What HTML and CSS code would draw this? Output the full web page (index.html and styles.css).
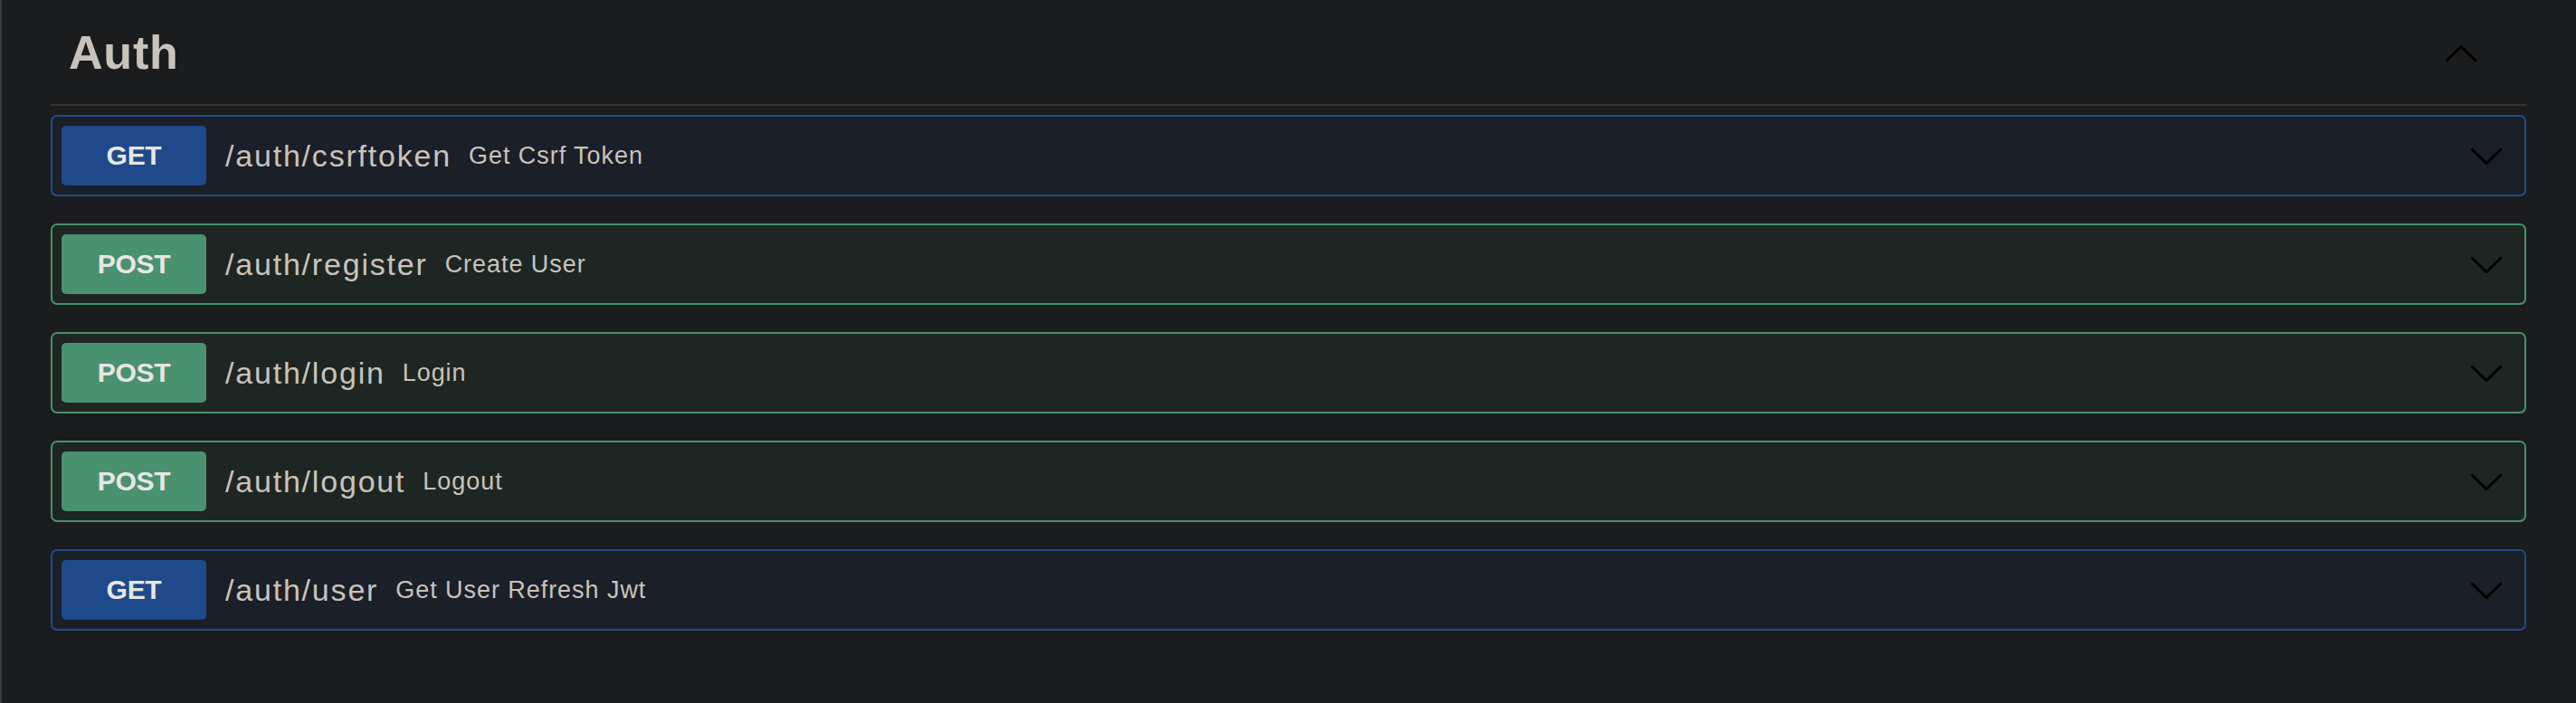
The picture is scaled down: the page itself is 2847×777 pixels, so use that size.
FILE: index.html
```html
<!DOCTYPE html>
<html lang="en">
<head>
<meta charset="utf-8">
<title>Auth</title>
<link rel="stylesheet" href="styles.css">
</head>
<body>
<div class="page">
  <section class="tag-section">
    <h3 class="tag-heading">
      <span class="tag-name">Auth</span>
      <button class="expand" aria-label="Collapse">
        <svg class="arrow" width="40" height="40" viewBox="0 0 20 20" aria-hidden="true"><path d="M17.418 14.908c.272.268.709.268.979 0s.271-.701 0-.969l-7.908-7.83c-.27-.268-.707-.268-.979 0l-7.908 7.83c-.27.268-.27.701 0 .969.271.268.709.268.979 0L10 7.767l7.418 7.141z"/></svg>
      </button>
    </h3>
    <div class="ops">
      <div class="opblock get">
        <span class="method">GET</span>
        <span class="path">/auth/csrftoken</span>
        <span class="desc">Get Csrf Token</span>
        <svg class="arrow down" width="40" height="40" viewBox="0 0 20 20" aria-hidden="true"><path d="M17.418 6.109c.272-.268.709-.268.979 0s.271.701 0 .969l-7.908 7.830c-.27.268-.707.268-.979 0l-7.908-7.830c-.27-.268-.27-.701 0-.969.271-.268.709-.268.979 0L10 13.25l7.418-7.141z"/></svg>
      </div>
      <div class="opblock post">
        <span class="method">POST</span>
        <span class="path">/auth/register</span>
        <span class="desc">Create User</span>
        <svg class="arrow down" width="40" height="40" viewBox="0 0 20 20" aria-hidden="true"><path d="M17.418 6.109c.272-.268.709-.268.979 0s.271.701 0 .969l-7.908 7.830c-.27.268-.707.268-.979 0l-7.908-7.830c-.27-.268-.27-.701 0-.969.271-.268.709-.268.979 0L10 13.25l7.418-7.141z"/></svg>
      </div>
      <div class="opblock post">
        <span class="method">POST</span>
        <span class="path">/auth/login</span>
        <span class="desc">Login</span>
        <svg class="arrow down" width="40" height="40" viewBox="0 0 20 20" aria-hidden="true"><path d="M17.418 6.109c.272-.268.709-.268.979 0s.271.701 0 .969l-7.908 7.830c-.27.268-.707.268-.979 0l-7.908-7.830c-.27-.268-.27-.701 0-.969.271-.268.709-.268.979 0L10 13.25l7.418-7.141z"/></svg>
      </div>
      <div class="opblock post">
        <span class="method">POST</span>
        <span class="path">/auth/logout</span>
        <span class="desc">Logout</span>
        <svg class="arrow down" width="40" height="40" viewBox="0 0 20 20" aria-hidden="true"><path d="M17.418 6.109c.272-.268.709-.268.979 0s.271.701 0 .969l-7.908 7.830c-.27.268-.707.268-.979 0l-7.908-7.830c-.27-.268-.27-.701 0-.969.271-.268.709-.268.979 0L10 13.25l7.418-7.141z"/></svg>
      </div>
      <div class="opblock get">
        <span class="method">GET</span>
        <span class="path">/auth/user</span>
        <span class="desc">Get User Refresh Jwt</span>
        <svg class="arrow down" width="40" height="40" viewBox="0 0 20 20" aria-hidden="true"><path d="M17.418 6.109c.272-.268.709-.268.979 0s.271.701 0 .969l-7.908 7.830c-.27.268-.707.268-.979 0l-7.908-7.830c-.27-.268-.27-.701 0-.969.271-.268.709-.268.979 0L10 13.25l7.418-7.141z"/></svg>
      </div>
    </div>
  </section>
</div>
</body>
</html>
```

FILE: styles.css
```css
html, body {
  margin: 0;
  padding: 0;
  background: #1b1c1e;
}

body {
  font-family: "Liberation Sans", Arial, sans-serif;
  color: #c8c3bc;
}

.page {
  min-height: 777px;
  box-sizing: border-box;
  border-left: 2px solid #3a3b3d;
  padding: 0 55px 0 54px;
}

.tag-section {
  display: flex;
  flex-direction: column;
}

.tag-heading {
  margin: 0;
  height: 115px;
  display: flex;
  align-items: center;
  justify-content: space-between;
  padding: 0 52px 0 20px;
  border-bottom: 2px solid #363432;
}

.tag-name {
  font-size: 52px;
  font-weight: 700;
  letter-spacing: 0.8px;
  color: #c8c3bc;
}

.expand {
  background: none;
  border: 0;
  padding: 0;
  margin: 0;
  display: flex;
  cursor: pointer;
}

.arrow {
  display: block;
  fill: #000;
}

.ops {
  display: flex;
  flex-direction: column;
  gap: 30px;
  padding-top: 10px;
}

.opblock {
  display: flex;
  align-items: center;
  height: 90px;
  box-sizing: border-box;
  border: 2px solid;
  border-radius: 7px;
  padding: 0 22px 0 10px;
}

.opblock.get {
  background: #1b1f27;
  border-color: #1f4b8e;
}

.opblock.post {
  background: #1e2623;
  border-color: #48906b;
}

.method {
  width: 160px;
  height: 66px;
  flex: none;
  display: flex;
  align-items: center;
  justify-content: center;
  border-radius: 5px;
  font-size: 30px;
  font-weight: 700;
  letter-spacing: -0.3px;
  color: #e8e6e3;
}

.get .method {
  background: #1e4a8b;
}

.post .method {
  background: #4a9170;
}

.path {
  margin-left: 21px;
  font-size: 34px;
  letter-spacing: 1.8px;
  color: #c8c3bc;
}

.desc {
  margin-left: 19px;
  font-size: 27px;
  letter-spacing: 0.95px;
  color: #c8c3bc;
  flex: 1;
}

.arrow.down {
  flex: none;
}
```
